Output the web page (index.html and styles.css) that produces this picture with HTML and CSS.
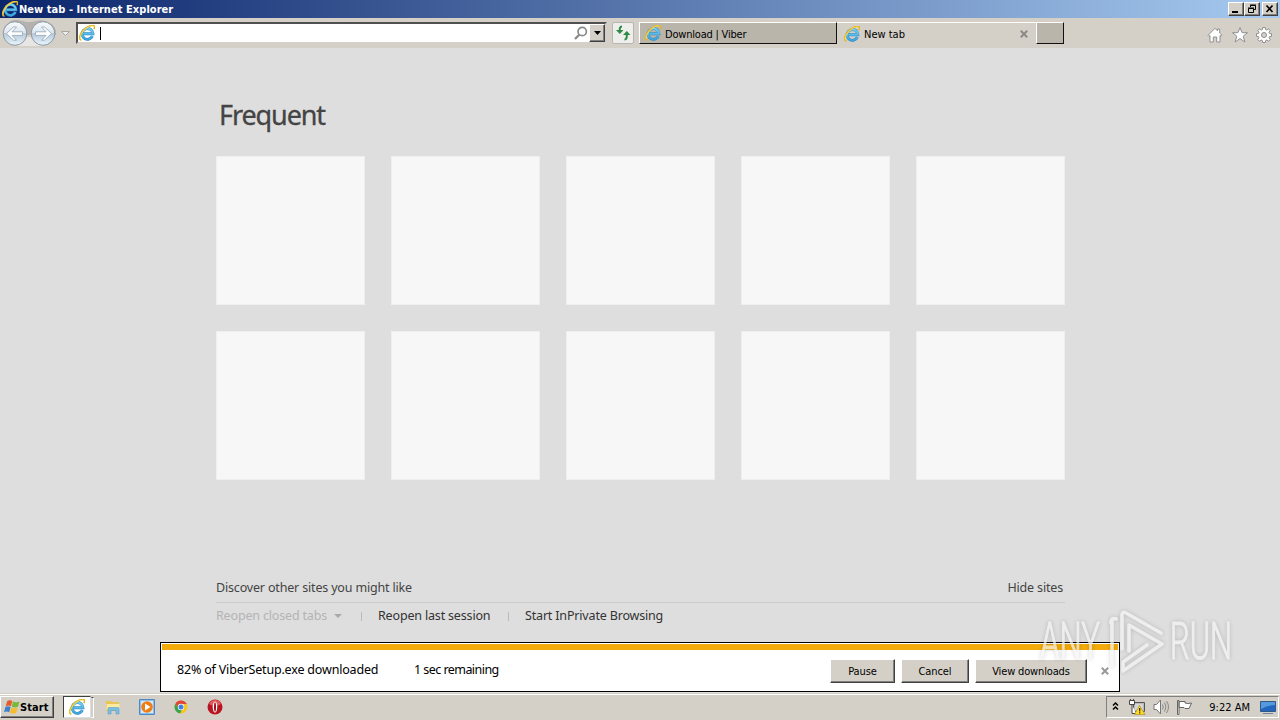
FILE: index.html
```html
<!DOCTYPE html>
<html lang="en">
<head>
  <meta charset="UTF-8">
  <title>New tab - Internet Explorer</title>
  <link rel="stylesheet" href="styles.css">
</head>
<body>
  <!-- shared icons -->
  <svg class="defs" width="0" height="0">
    <linearGradient id="blue" gradientUnits="userSpaceOnUse" x1="0" y1="2" x2="0" y2="15">
      <stop offset="0" stop-color="#7fd6f5"/><stop offset="1" stop-color="#3aa3dd"/>
    </linearGradient>
    <linearGradient id="glass" x1="0" y1="0" x2="0" y2="1">
      <stop offset="0" stop-color="#f8fbfd"/><stop offset=".48" stop-color="#dbe6ef"/>
      <stop offset=".5" stop-color="#b6c9da"/><stop offset="1" stop-color="#e9f6fd"/>
    </linearGradient>
    <symbol id="ie" viewBox="0 0 16 16">
      <path d="M13.400 11.200A5.400 5.400 0 1 1 13.900 8.700H4.500" fill="none" stroke="#2b86c0" stroke-width="2.900"/>
      <path d="M13.400 11.200A5.400 5.400 0 1 1 13.900 8.700H4.500" fill="none" stroke="url(#blue)" stroke-width="1.900"/>
      <path d="M2.400 15.200C-.6 14.500.3 9.400 4.600 5S14.200-.8 15.300 1.200c.5.800.2 2-.4 3" fill="none" stroke="#e3b723" stroke-width="1.600"/>
      <path d="M1.400 13.700C.8 11.800 2.400 8 5.800 4.700S12 .8 14.300 1.200" fill="none" stroke="#ffe469" stroke-width=".8"/>
    </symbol>
  </svg>

  <header class="titlebar">
    <svg class="ie-icon"><use href="#ie"/></svg>
    <span class="title">New tab - Internet Explorer</span>
    <div class="window-buttons">
      <button><svg viewBox="0 0 14 12"><path d="M3 9h6" stroke="#000" stroke-width="2"/></svg></button>
      <button><svg viewBox="0 0 14 12"><path d="M5.500 4V2.500h5v4H9M5 2h6M3.500 5.500h5v4h-5zM3 5h6" fill="none" stroke="#000"/></svg></button>
      <button class="close"><svg viewBox="0 0 14 12"><path d="M3.500 2.500l6 6.500M9.500 2.500l-6 6.500" stroke="#000" stroke-width="1.7"/></svg></button>
    </div>
  </header>

  <nav class="toolbar">
    <svg class="nav-buttons" viewBox="0 0 76 30">
      <path d="M10 3.500Q15 1 22 3q7 2 14 0 8-2 14 2 7 4 6 12H4V9z" fill="#b5b1ae"/>
      <path d="M15 19h30l-3 9H18z" fill="#e8e6e3"/>
      <g fill="url(#glass)" stroke="#8e99a5">
        <circle cx="15" cy="15.500" r="11.800"/><circle cx="43" cy="15.500" r="11.800"/>
      </g>
      <g fill="#fff" stroke="#9aabbc" stroke-width=".9">
        <path d="M6.500 15.500l7-6.500h3l-4.500 4.800h10.500v3.600H12l4.500 4.800h-3z"/>
        <path d="M51.500 15.500l-7-6.500h-3l4.500 4.800H35.500v3.600H46l-4.500 4.800h3z"/>
      </g>
      <path d="M61.500 13.500h8l-4 4z" fill="#eee" stroke="#aaa6a0"/>
    </svg>
    <div class="address">
      <svg class="ie-icon"><use href="#ie"/></svg>
      <i class="caret"></i>
      <svg class="search" viewBox="0 0 14 14"><circle cx="8.200" cy="5.500" r="4.200"/><path d="M5.200 8.700L1 13" stroke-width="2.200"/></svg>
      <button class="drop"><svg viewBox="0 0 7 4"><path d="M0 0h7L3.500 4z"/></svg></button>
    </div>
    <button class="refresh">
      <svg viewBox="0 0 16 16"><path d="M7 1.500C4.500 1.500 4.700 4 4.700 6M9.500 14.500c2.500 0 2.300-2.500 2.300-5" fill="none" stroke="#2c8b44" stroke-width="2"/><path d="M1 5h7.500L4.800 9zM8 10h7.500L11.800 6z" fill="#2c8b44"/></svg>
    </button>
    <div class="tabs">
      <div class="tab inactive"><svg class="ie-icon"><use href="#ie"/></svg><span>Download | Viber</span></div>
      <div class="tab active">
        <svg class="ie-icon"><use href="#ie"/></svg><span>New tab</span>
        <svg class="x" viewBox="0 0 8 8"><path d="M.8.800l6.400 6.400M7.200.8L.8 7.200"/></svg>
      </div>
      <div class="tab new"></div>
    </div>
    <div class="tools">
      <svg viewBox="0 0 16 16"><path d="M1 8.300L8 1.300l2.500 2.500V2h2.200v4L15 8.300l-1 1-1-.8v6.500H9.700v-5H6.300v5H3V8.500l-1 .8z"/></svg>
      <svg viewBox="0 0 16 16"><path d="M8 .7l2.100 5h5.400l-4.300 3.500 1.700 5.800L8 11.600 3.100 15l1.700-5.800L.5 5.700h5.400z"/></svg>
      <svg viewBox="0 0 16 16"><path fill-rule="evenodd" d="M6.700.6h2.600l.4 2 1.100.5 1.800-1.200 1.600 1.600-1.200 1.800.5 1.100 2 .4v2.500l-2 .4-.5 1.100 1.200 1.800-1.600 1.600-1.800-1.200-1.100.5-.4 2H6.700l-.4-2-1.100-.5-1.800 1.200-1.600-1.600L3 10.800l-.5-1.100-2-.4V6.800l2-.4L3 5.300 1.800 3.500l1.600-1.600 1.800 1.200 1.100-.5zM8 5.500a2.500 2.500 0 1 0 0 5 2.500 2.500 0 0 0 0-5z"/></svg>
    </div>
  </nav>

  <main class="page">
    <h1>Frequent</h1>
    <div class="tiles">
      <div></div><div></div><div></div><div></div><div></div>
      <div></div><div></div><div></div><div></div><div></div>
    </div>
    <div class="links discover"><span>Discover other sites you might like</span><span>Hide sites</span></div>
    <div class="links actions">
      <span class="disabled">Reopen closed tabs</span><i class="arrow"></i>
      <i class="sep"></i><span class="reopen">Reopen last session</span>
      <i class="sep"></i><span>Start InPrivate Browsing</span>
    </div>
  </main>

  <!-- download notification, floats over the page -->
  <section class="download">
    <div class="stripe"></div>
    <div class="download-row">
      <span class="status">82% of ViberSetup.exe downloaded</span>
      <span class="remaining">1 sec remaining</span>
      <div class="download-buttons">
        <button>Pause</button>
        <button>Cancel</button>
        <button>View downloads</button>
      </div>
      <svg class="x" viewBox="0 0 8 8"><path d="M.8.800l6.400 6.400M7.200.8L.8 7.200"/></svg>
    </div>
  </section>

  <footer class="taskbar">
    <button class="start">
      <svg viewBox="0 0 16 16"><path d="M3.300 2q2.500-1.700 5 0L6.900 7.200q-2.500-1.600-5.200 0z" fill="#e65a2b"/><path d="M9 2.500q3 1.600 6.500 0L14 7.800q-3.300 1.500-6.400-.2z" fill="#78b83c"/><path d="M1.400 8.100q2.700-1.600 5.200 0L5.200 13.300q-2.700-1.500-5.200 0z" fill="#3c80ce"/><path d="M7.300 8.500q3 1.600 6.400.2l-1.500 5.200q-3.200 1.400-6.300-.2z" fill="#f5bd2b"/></svg>
      <span>Start</span>
    </button>
    <div class="task-active"><svg class="ie-icon"><use href="#ie"/></svg></div>
    <i class="stack"></i>
    <div class="launchers">
      <svg viewBox="0 0 16 16"><path d="M1 2h5l1 1h7v9H1z" fill="#e9c554"/><path d="M1.500 5h13v6h-13z" fill="#fbeaa0"/><path d="M3 15V9.500q0-1 1-1h9q1 0 1 1V15h-3v-3.500H6V15z" fill="#78bfe3" stroke="#4994c0" stroke-width=".5"/></svg>
      <svg viewBox="0 0 16 16"><path d="M.5.500h15v15H.5z" fill="#8cbfe9" stroke="#4b8ac6"/><path d="M2 2h12v12H2z" fill="#d4e8f8"/><circle cx="8" cy="8" r="5.800" fill="#ef7d14"/><path d="M6 4.500l5.500 3.500L6 11.500z" fill="#fff"/></svg>
      <svg viewBox="0 0 16 16"><circle cx="8" cy="8" r="6.500" fill="#f9c51d"/><path d="M2.400 4.700A6.500 6.500 0 0 1 13.700 5H8L6 10z" fill="#df4637"/><path d="M2.400 4.700L6 10l3 .7-2 3.700A6.500 6.500 0 0 1 2.400 4.700z" fill="#36a353"/><circle cx="8" cy="8" r="3.200" fill="#fff"/><circle cx="8" cy="8" r="2.500" fill="#427fe0"/></svg>
      <svg viewBox="0 0 16 16"><circle cx="8" cy="8" r="7.500" fill="#b91520"/><path d="M2 5a6.500 6.500 0 0 1 12 0q-6 4-12 0" fill="#e05a5c"/><ellipse cx="8" cy="8" rx="2.300" ry="5.500" fill="#fff"/><ellipse cx="8" cy="8" rx="1" ry="4.700" fill="#9e1019"/></svg>
    </div>
    <div class="tray">
      <svg class="chevrons" viewBox="0 0 7 9"><path d="M1 3.500L3.500 1 6 3.500M1 7.500L3.500 5 6 7.500"/></svg>
      <svg viewBox="0 0 16 16"><path d="M4.500 3.500h11v9h-11z" fill="#bbb" stroke="#555"/><path d="M6 5h8v6H6z" fill="#d5d5d5"/><path d="M.5 1.500h5v4h-5zM3 5.500v9h4M1.500 0v2M4.500 0v2" fill="#fff" stroke="#444"/><path d="M10.500 6.500L16 15.500H5.500z" fill="#ffdc22" stroke="#a58710" stroke-width=".6"/><path d="M10.700 9v3.500M10.700 13.300v1.200" stroke="#222" stroke-width="1.200"/></svg>
      <svg viewBox="0 0 16 16"><path d="M1 5.500h2.500L7.500 1v14l-4-4.500H1z" fill="#fff" stroke="#777"/><path d="M9.500 5.500q1.500 2.500 0 5M11.500 3.500q3 4.500 0 9M13.500 2q4 6 0 12" fill="none" stroke="#888"/></svg>
      <svg viewBox="0 0 16 16"><path d="M.5 1.500H2v14H.5zM2 2.500h6v1.500q3 1 6.500 0L12 9.500H8L7 8.500H2z" fill="#fff" stroke="#666"/></svg>
      <span class="clock">9:22 AM</span>
      <svg class="desktop" viewBox="0 0 16 16"><path d="M.5 2.500h15v10H.5z" fill="#2266bd" stroke="#345785"/><path d="M1 3h14v3Q8 6 1 10z" fill="#5599df"/><path d="M3 14h10v1H3z" fill="#6d87a4"/></svg>
    </div>
  </footer>

  <svg class="watermark" viewBox="0 0 200 70">
    <g class="letters">
      <text x="3" y="52" textLength="60" lengthAdjust="spacingAndGlyphs">ANY</text>
      <text x="133" y="52" textLength="62" lengthAdjust="spacingAndGlyphs">RUN</text>
    </g>
    <g class="logo">
      <path d="M75 13v46M79 12q-5-2-5 4M85 42V8q0-4 4-2l35 20"/>
      <path d="M92 44V18l33 19-39 27v-9l24-17"/>
    </g>
  </svg>
</body>
</html>
```
FILE: styles.css
```css
* { margin:0; padding:0; box-sizing:border-box; }
body {
  position:relative;
  width:1280px; height:720px; overflow:hidden;
  display:flex; flex-direction:column;
  background:#dedede; color:#000;
  font:11px/14px "DejaVu Sans Condensed", "DejaVu Sans", sans-serif;
  font-stretch:condensed;
}
svg { display:block; flex:none; overflow:visible; }
.defs { position:absolute; }
span { white-space:nowrap; }
button {
  font:inherit; color:#000; background:#d4d0c8;
  border:1px solid; border-color:#fff #404040 #404040 #fff;
  box-shadow:inset -1px -1px #808080;
}
.ie-icon { width:16px; height:16px; }

/* title bar */
.titlebar {
  height:18px; flex:none;
  display:flex; align-items:center;
  padding:0 2px;
  background:linear-gradient(90deg,#0a246a,#a6caf0);
}
.title { margin:1px 0 0 1px; color:#fff; font-weight:bold; letter-spacing:.05px; }
.window-buttons { display:flex; margin-left:auto; }
.window-buttons button { width:16px; height:14px; }
.window-buttons svg { width:14px; height:12px; }
.window-buttons .close { margin-left:2px; }

/* toolbar */
.toolbar {
  height:30px; flex:none;
  display:flex; align-items:flex-start;
  background:#d4d0c8;
}
.nav-buttons { width:76px; height:30px; }
.address {
  width:531px; height:22px; margin-top:4px;
  display:flex; align-items:center;
  background:#fff;
  border:2px solid; border-color:#505050 #d4d0c8 #d4d0c8 #505050;
}
.caret { width:1px; height:13px; background:#000; margin-left:5px; }
.search { width:14px; height:14px; margin-left:auto; fill:none; stroke:#888; stroke-width:1.7; }
.drop { width:16px; height:18px; margin-left:1px; display:flex; align-items:center; justify-content:center; }
.drop svg { width:7px; height:4px; }
.address .ie-icon { margin-left:1px; }
.refresh {
  width:22px; height:22px; margin:4px 0 0 5px; padding:2px;
  background:#eeeeec; border:1px solid #b6b6b3; border-radius:2px; box-shadow:none;
}
.refresh svg { width:16px; height:16px; }
.tabs { display:flex; margin:4px 0 0 5px; }
.tab { height:22px; display:flex; align-items:center; }
.tab span { margin:2px 0 0 4px; letter-spacing:-.2px; }
.inactive, .new {
  background:#bab5ab;
  border:1px solid; border-color:#fff #111 #111 #fff;
}
.inactive { width:198px; padding-left:5px; }
.inactive span { margin-top:3px; }
.active { width:199px; padding-left:7px; border-top:1px solid #fff; }
.active span { letter-spacing:0; }
.new { width:28px; }
.x { width:8px; height:8px; stroke:#8b8986; stroke-width:2; }
.active .x { margin:1px 8px 0 auto; }
.tools { display:flex; gap:8.500px; margin:9px 8px 0 auto; }
.tools svg { width:16px; height:16px; fill:#fff; stroke:#8f8f8f; }

/* new tab page */
.page {
  flex:1;
  width:849px; margin:0 auto 0 216px;
  color:#444; font-family:"Noto Sans", sans-serif; font-stretch:normal;
}
.page h1 {
  margin:49px 0 0 3px; height:59px;
  font-size:27px; line-height:36px; font-weight:normal; letter-spacing:-1.100px;
  -webkit-text-stroke:.3px #444;
}
.tiles { display:grid; grid-template-columns:repeat(5,149px); gap:26px; }
.tiles div { height:149px; background:#f7f7f7; border:1px solid #efefef; }
.links { display:flex; font-size:12.500px; line-height:16px; letter-spacing:-.17px; }
.discover { justify-content:space-between; margin-top:100px; padding:0 2px 6px 0; border-bottom:1px solid #cbcbcb; }
.actions { align-items:center; margin-top:5px; color:#333; }
.disabled { width:112px; color:#b4b4b4; }
.arrow { margin-left:6px; border:4px solid transparent; border-top-color:#aaa; border-bottom:0; }
.sep { width:1px; height:9px; background:#bbb; margin:0 16px 0 19px; }
.reopen { width:114px; }
.reopen + .sep { margin-left:16px; }

/* download notification */
.download {
  position:absolute; left:160px; top:642px;
  width:960px; height:50px; padding:1px;
  background:#fff; border:1px solid #000;
}
.stripe { height:6px; background:#f3ab0b; }
.download-row { display:flex; align-items:center; height:40px; padding:0 9px 0 15px; }
.status, .remaining { font:12.500px/18px "Noto Sans", sans-serif; margin-bottom:1px; }
.status { width:237px; letter-spacing:-.18px; }
.remaining { letter-spacing:-.55px; }
.download-buttons { display:flex; gap:6px; margin:2px 14px 0 auto; }
.download-buttons button { width:65px; height:24px; padding-top:1px; letter-spacing:-.1px; }
.download-buttons button:nth-child(2) { width:68px; }
.download-buttons button:last-child { width:112px; letter-spacing:-.15px; }
.download .x { margin-top:2px; stroke:#999; }

/* taskbar */
.taskbar {
  height:27px; flex:none;
  display:flex; align-items:center;
  background:#d4d0c8; border-top:1px solid #d4d0c8; box-shadow:inset 0 1px #fff;
}
.start { width:54px; height:22px; display:flex; align-items:center; padding-left:3px; font-weight:bold; }
.start svg { width:16px; height:16px; }
.start span { margin-top:1px; letter-spacing:.1px; }
.task-active {
  width:28px; height:22px; margin:0 0 0 9px;
  display:flex; align-items:center; justify-content:center;
  background:#fff; border:1px solid; border-color:#404040 #ddd #ddd #404040;
}
.stack { width:3px; height:21px; border:1px solid; border-color:#404040 #fff #fff transparent; }
.launchers { display:flex; gap:18px; margin-left:11px; }
.launchers svg { width:16px; height:16px; }
.tray {
  width:173px; height:22px; margin:0 1px 0 auto;
  display:flex; align-items:center; gap:8px; padding:0 2px 0 5px;
  border:1px solid; border-color:#808080 #fff #fff #808080;
}
.tray svg { width:16px; height:16px; }
.tray .chevrons { width:7px; height:9px; margin:0 2px 2px 0; fill:none; stroke:#000; stroke-width:1.500; }
.clock { margin:1px 2px 0 auto; }

/* watermark */
.watermark { position:absolute; left:1037px; top:607px; width:200px; height:70px; filter:drop-shadow(0 0 2px rgba(0,0,0,.25)); opacity:.7; }
.letters { fill:#f5f5f5; font:300 51px Roboto, sans-serif; stroke:#f5f5f5; stroke-width:1.200; }
.logo { fill:none; stroke:#f5f5f5; stroke-width:3.600; stroke-linejoin:round; stroke-linecap:round; }
```
